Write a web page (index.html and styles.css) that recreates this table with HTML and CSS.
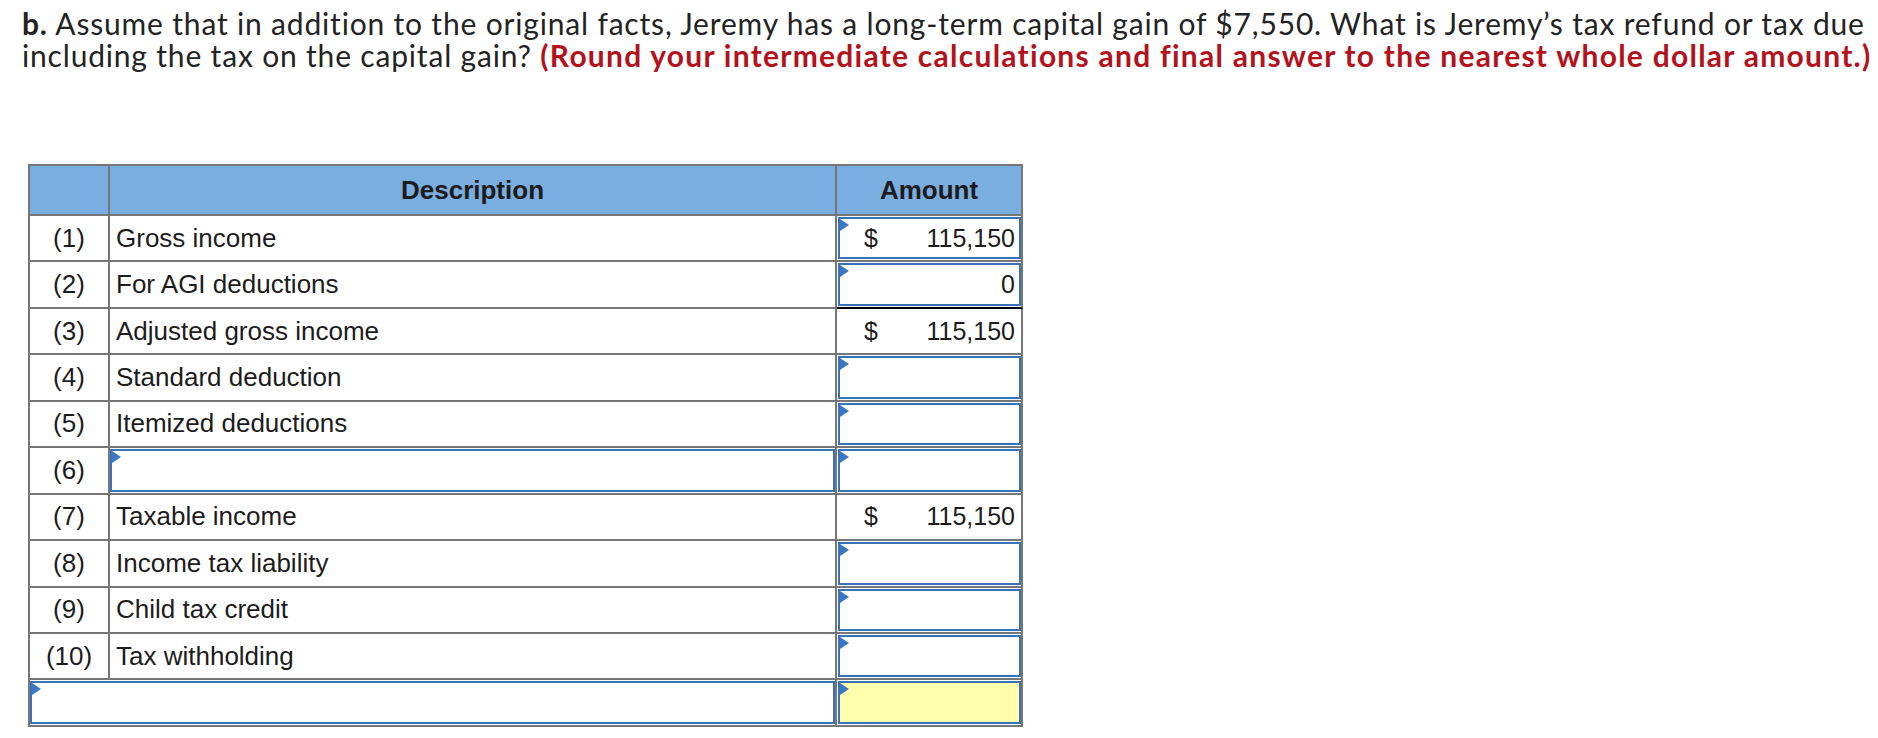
FILE: index.html
```html
<!DOCTYPE html>
<html lang="en">
<head>
<meta charset="utf-8">
<title>Capital gain question</title>
<link rel="stylesheet" href="styles.css">
</head>
<body>
<div class="page">
  <p class="question"><b>b.</b> Assume that in addition to the original facts, Jeremy has a long-term capital gain of $7,550. What is Jeremy’s tax refund or tax due<br>including the tax on the capital gain? <strong class="hint">(Round your intermediate calculations and final answer to the nearest whole dollar amount.)</strong></p>

  <div class="sheet">
    <div class="cell head"></div>
    <div class="cell head">Description</div>
    <div class="cell head">Amount</div>

    <div class="cell num">(1)</div>
    <div class="cell desc">Gross income</div>
    <div class="cell amt"><div class="field marked"><span>$</span><span>115,150</span></div></div>

    <div class="cell num">(2)</div>
    <div class="cell desc">For AGI deductions</div>
    <div class="cell amt total-above"><div class="field marked"><span></span><span>0</span></div></div>

    <div class="cell num">(3)</div>
    <div class="cell desc">Adjusted gross income</div>
    <div class="cell amt"><div class="field plain"><span>$</span><span>115,150</span></div></div>

    <div class="cell num">(4)</div>
    <div class="cell desc">Standard deduction</div>
    <div class="cell amt"><div class="field marked"></div></div>

    <div class="cell num">(5)</div>
    <div class="cell desc">Itemized deductions</div>
    <div class="cell amt"><div class="field marked"></div></div>

    <div class="cell num">(6)</div>
    <div class="cell desc input"><div class="field marked"></div></div>
    <div class="cell amt"><div class="field marked"></div></div>

    <div class="cell num">(7)</div>
    <div class="cell desc">Taxable income</div>
    <div class="cell amt"><div class="field plain"><span>$</span><span>115,150</span></div></div>

    <div class="cell num">(8)</div>
    <div class="cell desc">Income tax liability</div>
    <div class="cell amt"><div class="field marked"></div></div>

    <div class="cell num">(9)</div>
    <div class="cell desc">Child tax credit</div>
    <div class="cell amt"><div class="field marked"></div></div>

    <div class="cell num">(10)</div>
    <div class="cell desc">Tax withholding</div>
    <div class="cell amt"><div class="field marked"></div></div>

    <div class="cell desc input wide"><div class="field marked"></div></div>
    <div class="cell amt"><div class="field marked answer"></div></div>
  </div>
</div>
</body>
</html>
```

FILE: styles.css
```css
* { box-sizing: border-box; }

html, body {
  margin: 0;
  padding: 0;
  background: #ffffff;
}

.page {
  padding: 7px 0 0 22px;
}

.question {
  margin: 0;
  font-family: Lato, "Open Sans", sans-serif;
  font-size: 30px;
  line-height: 32px;
  letter-spacing: 0.82px;
  font-variant-ligatures: none;
  color: #232323;
  white-space: nowrap;
}

.question b {
  font-weight: 700;
}

.hint {
  color: #b3121d;
  font-weight: 700;
  letter-spacing: 1.25px;
}

.sheet {
  margin: 93px 0 0 6px;
  display: grid;
  grid-template-columns: 80px 727px 186px;
  grid-template-rows: 50px repeat(11, 46.45px);
  width: 995px;
  border-left: 2px solid #777777;
  border-top: 2px solid #777777;
  font-family: "Liberation Sans", Arial, sans-serif;
  font-size: 26px;
  color: #1c1c1c;
}

.cell {
  border-right: 2px solid #777777;
  border-bottom: 2px solid #777777;
  display: flex;
  align-items: center;
  min-width: 0;
}

.head {
  background: #7aade0;
  font-weight: 700;
  justify-content: center;
}

.num {
  justify-content: center;
}

.desc {
  padding-left: 6px;
}

.desc.input {
  padding: 1px 0;
  align-items: stretch;
}

.wide {
  grid-column: span 2;
}

.amt {
  padding: 1px 0 1px 1px;
  align-items: stretch;
}

.total-above {
  border-bottom-color: #000000;
}

.field {
  position: relative;
  flex: 1;
  display: flex;
  align-items: center;
  justify-content: space-between;
  border: 2px solid #3a72b8;
  background: #ffffff;
  padding: 0 4px 0 24px;
  font-size: 25px;
}

.field.plain {
  border-color: transparent;
  background: transparent;
}

.field.answer {
  background: #ffffad;
}

.field.marked::before {
  content: "";
  position: absolute;
  left: 0;
  top: 0;
  width: 0;
  height: 0;
  border-left: 9px solid #3b78c4;
  border-top: 6px solid transparent;
  border-bottom: 6px solid transparent;
}
```
